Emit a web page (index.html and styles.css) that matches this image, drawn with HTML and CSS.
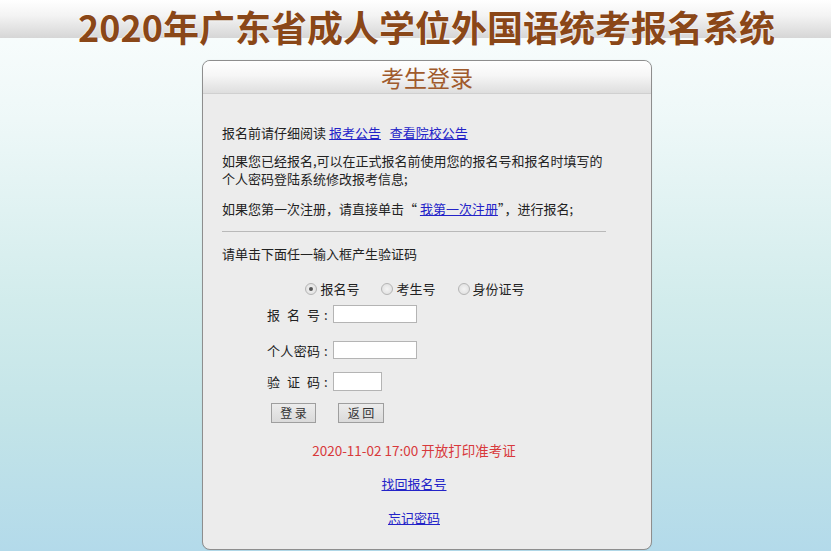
FILE: index.html
```html
<!DOCTYPE html>
<html lang="zh-CN">
<head>
<meta charset="utf-8">
<title>2020年广东省成人学位外国语统考报名系统</title>
<link rel="stylesheet" href="styles.css">
</head>
<body>
<header class="topbar">
  <h1 class="site-title">2020年广东省成人学位外国语统考报名系统</h1>
</header>
<main class="stage">
  <section class="panel">
    <div class="panel-head">考生登录</div>
    <div class="panel-body">
      <p class="note n1">报名前请仔细阅读 <a href="#">报考公告</a>&nbsp;&nbsp;&nbsp;<a href="#">查看院校公告</a></p>
      <p class="note n2">如果您已经报名,可以在正式报名前使用您的报名号和报名时填写的<br>个人密码登陆系统修改报考信息;</p>
      <p class="note n3">如果您第一次注册，请直接单击“ <a href="#">我第一次注册</a>”，进行报名;</p>
      <hr class="rule">
      <p class="note n4">请单击下面任一输入框产生验证码</p>
      <div class="radios">
        <label class="radio"><span class="dot on"></span>报名号</label>
        <label class="radio"><span class="dot"></span>考生号</label>
        <label class="radio"><span class="dot"></span>身份证号</label>
      </div>
      <div class="form">
        <div class="row r1">
          <span class="lab"><span>报</span><span>名</span><span>号</span></span><span class="colon">:</span>
          <span class="input"></span>
        </div>
        <div class="row r2">
          <span class="lab"><span>个</span><span>人</span><span>密</span><span>码</span></span><span class="colon">:</span>
          <span class="input"></span>
        </div>
        <div class="row r3">
          <span class="lab"><span>验</span><span>证</span><span>码</span></span><span class="colon">:</span>
          <span class="input short"></span>
        </div>
        <div class="buttons">
          <span class="btn">登 录</span>
          <span class="btn">返 回</span>
        </div>
      </div>
      <p class="notice">2020-11-02 17:00 开放打印准考证</p>
      <p class="center-link"><a href="#">找回报名号</a></p>
      <p class="center-link last"><a href="#">忘记密码</a></p>
    </div>
  </section>
</main>
</body>
</html>
```
FILE: styles.css
```css
html, body {
  margin: 0;
  padding: 0;
  height: 551px;
  overflow: hidden;
}
body {
  font-family: "Noto Sans CJK SC", "Noto Sans", sans-serif;
  font-size: 13px;
  color: #222;
  background: linear-gradient(to bottom, #fbfefe 0px, #eef8f8 120px, #d2ecec 300px, #c3e4e8 420px, #b3daea 551px);
}
.topbar {
  height: 38px;
  box-sizing: border-box;
  padding-top: 7px;
  background: linear-gradient(to bottom, #ffffff 0%, #f4f4f4 40%, #d6d6d6 100%);
}
.site-title {
  margin: 0;
  text-align: center;
  font-size: 36px;
  line-height: 38px;
  font-weight: 700;
  color: #8a4718;
  letter-spacing: 0;
  text-shadow: 0 0 2px #fff, 0 0 1px #fff;
  white-space: nowrap;
  padding-left: 22px;
}
.stage {
  padding-top: 22px;
  padding-left: 202px;
  display: flex;
}
.panel {
  width: 448px;
  border: 1px solid #8e8e8e;
  border-radius: 8px;
  background: #ececec;
  overflow: hidden;
  box-shadow: 0 0 1px rgba(0,0,0,0.15);
}
.panel-head {
  height: 32px;
  line-height: 32px;
  text-align: center;
  font-size: 23px;
  color: #a05a2c;
  background: linear-gradient(to bottom, #ffffff 0%, #f6f6f6 45%, #dedede 100%);
  border-bottom: 1px solid #d0d0d0;
}
.panel-body {
  padding: 30px 45px 22px 19px;
}
.note {
  margin: 0;
  line-height: 18px;
}
.n1 { margin-bottom: 10px; }
.n2 { margin-bottom: 12px; }
a {
  color: #2323c8;
  text-decoration: underline;
}
.rule {
  margin: 13px 0 13px 0;
  border: 0;
  border-top: 1px solid #b9b9b9;
  height: 0;
  width: 384px;
}
.radios {
  margin-top: 17px;
  display: flex;
  justify-content: center;
  gap: 22px;
  line-height: 18px;
  padding-left: 2px;
}
.radio {
  display: flex;
  align-items: center;
  gap: 3px;
}
.dot {
  width: 10px;
  height: 10px;
  border-radius: 50%;
  border: 1px solid #b5b5b5;
  background: radial-gradient(circle, #f4f4f4 0%, #dcdcdc 100%);
  position: relative;
  box-sizing: content-box;
}
.dot.on::after {
  content: "";
  position: absolute;
  left: 3px;
  top: 3px;
  width: 4px;
  height: 4px;
  border-radius: 50%;
  background: #555;
}
.form {
  padding-left: 45px;
  margin-top: 7px;
}
.row {
  display: flex;
  align-items: center;
  height: 18px;
}
.r2 { margin-top: 18px; }
.r3 { margin-top: 13px; }
.lab {
  display: flex;
  justify-content: space-between;
  width: 53px;
}
.colon {
  margin: 0 5px 0 4px;
}
.input {
  width: 82px;
  height: 16px;
  background: #fff;
  border: 1px solid #b4b4b4;
  display: block;
}
.input.short {
  width: 47px;
  height: 17px;
}
.buttons {
  margin-top: 13px;
  display: flex;
  gap: 22px;
  padding-left: 4px;
}
.btn {
  display: block;
  width: 43px;
  height: 18px;
  line-height: 18px;
  text-align: center;
  font-size: 12px;
  color: #333;
  border: 1px solid #9e9e9e;
  background: linear-gradient(to bottom, #ececec, #dadada);
}
.btn + .btn { width: 44px; }
.notice {
  margin: 18px 0 0 0;
  text-align: center;
  color: #d8393b;
  line-height: 18px;
  font-size: 13.5px;
}
.center-link {
  margin: 16px 0 0 0;
  text-align: center;
  line-height: 18px;
}
.center-link.last { margin-top: 16px; }
```
